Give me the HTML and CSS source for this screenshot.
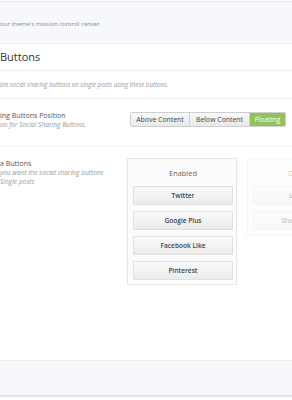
FILE: index.html
```html
<!DOCTYPE html>
<html>
<head>
<meta charset="utf-8">
<link rel="stylesheet" href="styles.css">
</head>
<body>
<div class="panel">
  <div class="top-header">
    <p class="tagline">our theme's mission control center.</p>
  </div>
  <div class="section-head">
    <h2 class="section-title">Buttons</h2>
  </div>
  <div class="section-desc">
    <p>ble social sharing buttons on single posts using these buttons.</p>
  </div>
  <div class="field field-position">
    <div class="field-label">
      <div class="label-title">ing Buttons Position</div>
      <div class="label-sub">on for Social Sharing Buttons.</div>
    </div>
    <div class="field-control">
      <div class="btn-group">
        <span class="seg">Above Content</span>
        <span class="seg">Below Content</span>
        <span class="seg seg-active">Floating</span>
      </div>
    </div>
  </div>
  <div class="field field-sorter">
    <div class="field-label">
      <div class="label-title">a Buttons</div>
      <div class="label-sub">you want the social sharing buttons</div>
      <div class="label-sub">Single posts</div>
    </div>
    <div class="field-control sorter">
      <div class="sort-box">
        <div class="sort-head">Enabled</div>
        <div class="sort-item">Twitter</div>
        <div class="sort-item">Google Plus</div>
        <div class="sort-item">Facebook Like</div>
        <div class="sort-item">Pinterest</div>
      </div>
      <div class="sort-box sort-disabled">
        <div class="sort-head">Disabled</div>
        <div class="sort-item">LinkedIn</div>
        <div class="sort-item">StumbleUpon</div>
      </div>
    </div>
  </div>
  <div class="spacer"></div>
  <div class="footer"></div>
</div>
</body>
</html>
```

FILE: styles.css
```css
html, body {
  margin: 0;
  padding: 0;
  background: #ffffff;
  overflow: hidden;
}
body {
  width: 292px;
  height: 400px;
  font-family: "Open Sans", "Liberation Sans", sans-serif;
}
.panel {
  display: flex;
  flex-direction: column;
  height: 400px;
  padding-top: 1px;
  box-sizing: border-box;
}
.top-header {
  height: 41px;
  background: #f6f8fb;
  border-top: 1px solid #e6e9ec;
  border-bottom: 1px solid #eceff2;
  display: flex;
  align-items: center;
  flex-shrink: 0;
}
.tagline {
  margin: 0;
  font-size: 6.1px;
  color: #8a8a8a;
  line-height: 8px;
  padding-top: 2px;
}
.section-head {
  height: 26px;
  display: flex;
  align-items: center;
  border-bottom: 1px solid #ececec;
  flex-shrink: 0;
}
.section-title {
  margin: 0;
  font-size: 11px;
  font-weight: 400;
  color: #333;
  line-height: 14px;
}
.section-desc {
  height: 27px;
  display: flex;
  align-items: center;
  border-bottom: 1px solid #ececec;
  flex-shrink: 0;
}
.section-desc p {
  margin: 0;
  font-size: 6.2px;
  font-style: italic;
  color: #9a9a9a;
  line-height: 8px;
}
.field {
  display: grid;
  grid-template-columns: 127px 1fr;
  flex-shrink: 0;
}
.field-position {
  height: 48px;
  border-bottom: 1px solid #f3f3f3;
  padding-top: 12px;
  box-sizing: border-box;
}
.field-sorter {
  padding-top: 11px;
}
.label-title {
  font-size: 7px;
  color: #555;
  line-height: 9px;
}
.label-sub {
  font-size: 6.6px;
  font-style: italic;
  color: #9a9a9a;
  line-height: 9px;
}
.field-sorter .field-label {
  padding-top: 1px;
}
.btn-group {
  display: flex;
  margin-left: 3px;
  width: 156px;
  height: 15px;
  border: 1px solid #cfcfcf;
  border-radius: 2px;
  overflow: hidden;
  box-sizing: border-box;
  margin-top: 1px;
}
.seg {
  display: flex;
  align-items: center;
  justify-content: center;
  font-size: 6.9px;
  color: #444;
  background: linear-gradient(#f9f9f9, #e9e9e9);
  border-right: 1px solid #d2d2d2;
}
.seg:nth-child(1) { width: 58px; }
.seg:nth-child(2) { width: 59px; }
.seg-active {
  flex: 1;
  border-right: none;
  background: #92c25a;
  color: #ffffff;
}
.sorter {
  display: flex;
  gap: 10px;
  align-items: flex-start;
  overflow: hidden;
}
.sort-box {
  flex-shrink: 0;
  width: 110px;
  border: 1px solid #e6e6e6;
  background: #fcfcfc;
  box-sizing: border-box;
  padding: 0 3px 4px 5px;
  box-shadow: 0 1px 2px rgba(0,0,0,0.04);
}
.sort-head {
  height: 27px;
  display: flex;
  align-items: center;
  justify-content: center;
  font-size: 7.4px;
  color: #666;
}
.sort-item {
  height: 19px;
  margin-top: 6px;
  display: flex;
  align-items: center;
  justify-content: center;
  font-size: 6.6px;
  font-weight: 600;
  color: #444;
  background: linear-gradient(#fafafa, #ebebeb);
  border: 1px solid #e0e0e0;
  border-radius: 1px;
  box-sizing: border-box;
}
.sort-head + .sort-item {
  margin-top: 0;
}
.sort-disabled {
  opacity: 0.35;
}
.spacer {
  flex: 1;
}
.footer {
  height: 34px;
  background: #f6f8fb;
  border-top: 1px solid #eceff2;
  border-bottom: 2px solid #e3e6e9;
  margin-bottom: 3px;
  flex-shrink: 0;
}
```
